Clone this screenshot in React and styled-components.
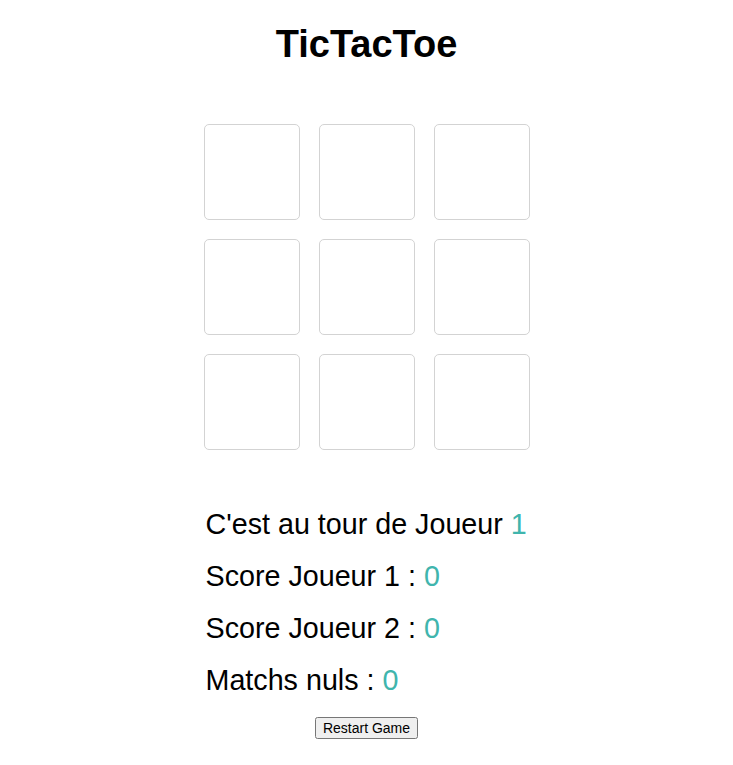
import React, { useState } from 'react';
import styled, { createGlobalStyle } from 'styled-components';

const GlobalStyle = createGlobalStyle`
    body {
        margin: 0;
        background: #ffffff;
        font-family: 'Liberation Sans', Arial, sans-serif;
        color: #000000;
    }
`;

const Page = styled.div`
    display: flex;
    flex-direction: column;
    align-items: center;
`;

const Title = styled.h1`
    font-size: 38px;
    font-weight: bold;
    line-height: 44px;
    margin: 22px 0 58px;
`;

const Board = styled.div`
    display: grid;
    grid-template-columns: repeat(3, 96px);
    grid-auto-rows: 96px;
    gap: 19px;
`;

const Cell = styled.button`
    box-sizing: border-box;
    width: 96px;
    height: 96px;
    background: #ffffff;
    border: 1px solid #d3d3d3;
    border-radius: 5px;
    padding: 0;
    font-family: 'Liberation Sans', Arial, sans-serif;
    font-size: 48px;
    cursor: pointer;
`;

const Infos = styled.div`
    width: 326px;
    display: flex;
    flex-direction: column;
    gap: 20px;
    margin-top: 58px;
`;

const Line = styled.p`
    margin: 0;
    font-size: 28.7px;
    line-height: 32px;
    padding-left: 2px;
`;

const Value = styled.span`
    color: #40b5ad;
`;

const Restart = styled.button`
    align-self: center;
    margin-top: 1px;
    font-family: 'Liberation Sans', Arial, sans-serif;
    font-size: 14px;
`;

const TicTacToe = () => {
    const [cells, setCells] = useState(Array(9).fill(""));
    const [player, setPlayer] = useState(1);
    const [scores] = useState({ p1: 0, p2: 0, draws: 0 });

    const play = (i) => {
        if (cells[i] !== "") return;
        const next = [...cells];
        next[i] = player === 1 ? "X" : "O";
        setCells(next);
        setPlayer(player === 1 ? 2 : 1);
    };

    const restart = () => {
        setCells(Array(9).fill(""));
        setPlayer(1);
    };

    return (
        <Page>
            <Title>TicTacToe</Title>
            <Board>
                {cells.map((c, i) => (
                    <Cell key={i} onClick={() => play(i)}>{c}</Cell>
                ))}
            </Board>
            <Infos>
                <Line>C'est au tour de Joueur <Value>{player}</Value></Line>
                <Line>Score Joueur 1 : <Value>{scores.p1}</Value></Line>
                <Line>Score Joueur 2 : <Value>{scores.p2}</Value></Line>
                <Line>Matchs nuls : <Value>{scores.draws}</Value></Line>
                <Restart onClick={restart}>Restart Game</Restart>
            </Infos>
        </Page>
    );
};

export default function App() {
    return (
        <>
            <GlobalStyle />
            <TicTacToe />
        </>
    );
}
